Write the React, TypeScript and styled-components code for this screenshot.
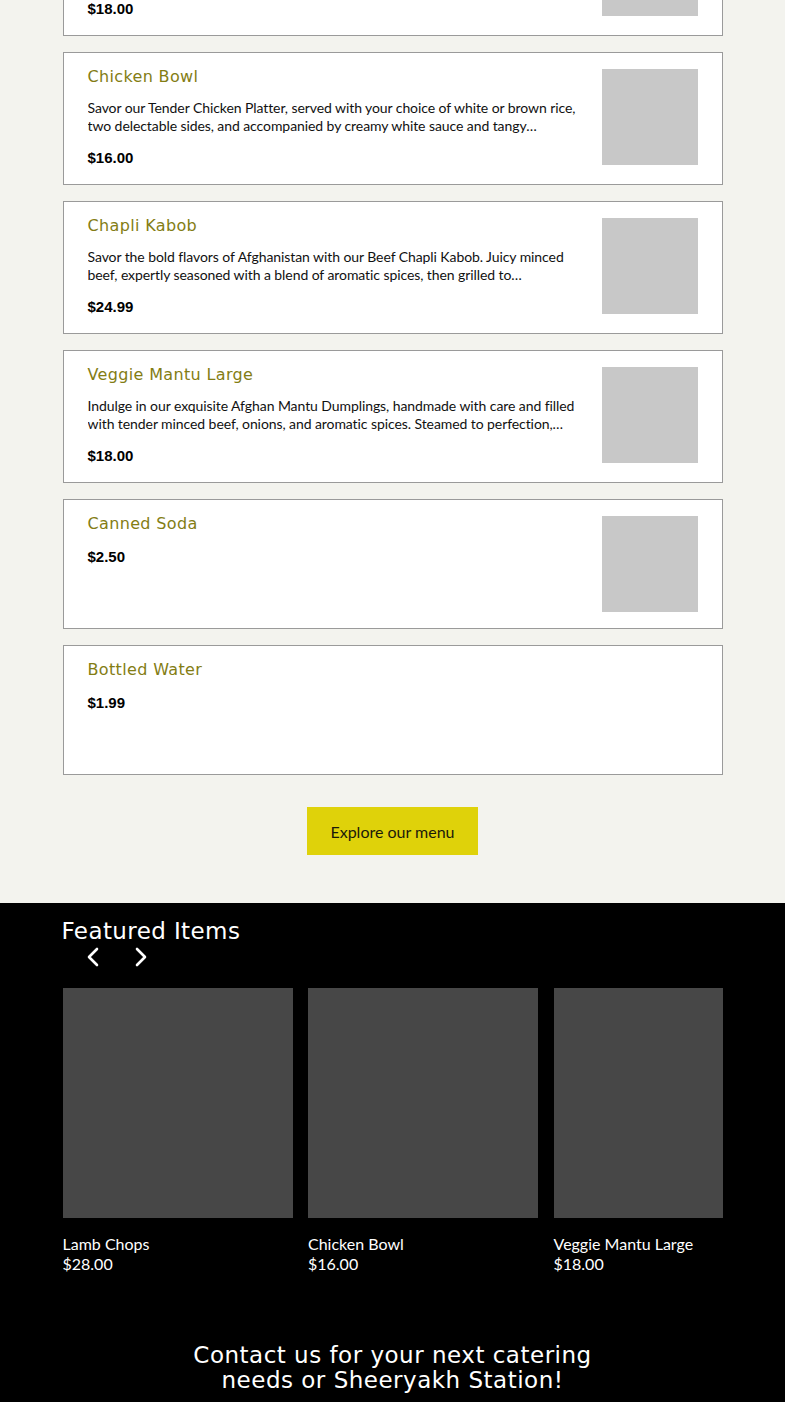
import styled, { createGlobalStyle } from "styled-components";

const GlobalStyle = createGlobalStyle`
  body {
    margin: 0;
    background: #000;
    font-family: Lato, "Open Sans", sans-serif;
  }
  * { box-sizing: border-box; }
`;

interface MenuItem {
  title: string;
  description?: string;
  price: string;
  image?: boolean;
}

const menuItems: MenuItem[] = [
  {
    title: "Beef Mantu Large",
    description:
      "Indulge in our exquisite Afghan Mantu Dumplings, handmade with care and filled with tender minced beef, onions, and aromatic spices.",
    price: "$18.00",
    image: true,
  },
  {
    title: "Chicken Bowl",
    description:
      "Savor our Tender Chicken Platter, served with your choice of white or brown rice, two delectable sides, and accompanied by creamy white sauce and tangy pomegranate chutney.",
    price: "$16.00",
    image: true,
  },
  {
    title: "Chapli Kabob",
    description:
      "Savor the bold flavors of Afghanistan with our Beef Chapli Kabob. Juicy minced beef, expertly seasoned with a blend of aromatic spices, then grilled to mouthwatering perfection.",
    price: "$24.99",
    image: true,
  },
  {
    title: "Veggie Mantu Large",
    description:
      "Indulge in our exquisite Afghan Mantu Dumplings, handmade with care and filled with tender minced beef, onions, and aromatic spices. Steamed to perfection, topped with yogurt and lentils.",
    price: "$18.00",
    image: true,
  },
  { title: "Canned Soda", price: "$2.50", image: true },
  { title: "Bottled Water", price: "$1.99" },
];

const featured = [
  { name: "Lamb Chops", price: "$28.00" },
  { name: "Chicken Bowl", price: "$16.00" },
  { name: "Veggie Mantu Large", price: "$18.00" },
];

const Chevron = ({ dir }: { dir: "left" | "right" }) => (
  <svg width="14" height="22" viewBox="0 0 14 22" fill="none">
    <polyline
      points={dir === "left" ? "11,3 3,11 11,19" : "3,3 11,11 3,19"}
      stroke="#fff"
      strokeWidth="2.6"
      strokeLinecap="round"
      strokeLinejoin="round"
    />
  </svg>
);

export default function App() {
  return (
    <>
      <GlobalStyle />
      <MenuSection>
        <List>
          {menuItems.map((item, index) => (
            <Card key={index}>
              <Info>
                <Title>{item.title}</Title>
                {item.description && <Description>{item.description}</Description>}
                <Price>{item.price}</Price>
              </Info>
              {item.image && <Thumb />}
            </Card>
          ))}
        </List>
        <ExploreButton>Explore our menu</ExploreButton>
      </MenuSection>

      <FeaturedSection>
        <Inner>
          <SectionHeading>Featured Items</SectionHeading>
          <Arrows>
            <ArrowButton aria-label="previous">
              <Chevron dir="left" />
            </ArrowButton>
            <ArrowButton aria-label="next">
              <Chevron dir="right" />
            </ArrowButton>
          </Arrows>
          <Track>
            {featured.map((item) => (
              <FeaturedCard key={item.name}>
                <FeaturedImage />
                <FeaturedName>{item.name}</FeaturedName>
                <FeaturedPrice>{item.price}</FeaturedPrice>
              </FeaturedCard>
            ))}
          </Track>
        </Inner>
        <Contact>
          Contact us for your next catering
          <br />
          needs or Sheeryakh Station!
        </Contact>
      </FeaturedSection>
    </>
  );
}

const MenuSection = styled.section`
  background: #f3f3ee;
  padding-bottom: 48px;
  display: flex;
  flex-direction: column;
  align-items: center;
  overflow: hidden;
`;

const List = styled.div`
  width: 660px;
  display: flex;
  flex-direction: column;
  gap: 16px;
  margin-top: -97px;
`;

const Card = styled.div`
  display: flex;
  gap: 24px;
  min-height: 130px;
  padding: 12px 24px 16px;
  background: #fff;
  border: 1px solid #9a9a9a;
`;

const Info = styled.div`
  flex: 1;
  min-width: 0;
  display: flex;
  flex-direction: column;
`;

const Title = styled.h3`
  margin: 1px 0 11px;
  font-family: "DejaVu Sans", sans-serif;
  font-size: 16px;
  line-height: 22px;
  font-weight: 400;
  letter-spacing: 0.35px;
  color: #837d14;
`;

const Description = styled.p`
  margin: 0 0 12px;
  max-height: 36px;
  font-size: 14px;
  line-height: 18px;
  letter-spacing: -0.08px;
  color: #111;
  display: -webkit-box;
  -webkit-line-clamp: 2;
  -webkit-box-orient: vertical;
  overflow: hidden;
`;

const Price = styled.div`
  font-family: "Liberation Sans", Arial, sans-serif;
  font-weight: 700;
  font-size: 15px;
  line-height: 21px;
  color: #000;
`;

const Thumb = styled.div`
  flex: none;
  width: 96px;
  height: 96px;
  margin-top: 4px;
  background: #c8c8c8;
`;

const ExploreButton = styled.button`
  margin-top: 32px;
  width: 171px;
  height: 48px;
  border: none;
  background: #dfd20a;
  color: #1a1a0a;
  font-family: Lato, sans-serif;
  font-size: 16px;
  cursor: pointer;
`;

const FeaturedSection = styled.section`
  background: #000;
  padding: 14px 0 12px;
`;

const Inner = styled.div`
  width: 660px;
  margin: 0 auto;
`;

const SectionHeading = styled.h2`
  margin: 0 0 0 -1px;
  font-family: "DejaVu Sans", sans-serif;
  font-size: 23px;
  line-height: 28px;
  font-weight: 400;
  letter-spacing: 0.4px;
  color: #fff;
`;

const Arrows = styled.div`
  display: flex;
  gap: 24px;
  padding-left: 18px;
  margin-bottom: 19px;
`;

const ArrowButton = styled.button`
  width: 24px;
  height: 24px;
  padding: 0;
  border: none;
  background: none;
  display: grid;
  place-items: center;
  cursor: pointer;
`;

const Track = styled.div`
  display: flex;
  gap: 15.5px;
  overflow: hidden;
`;

const FeaturedCard = styled.div`
  flex: none;
  width: 230px;
`;

const FeaturedImage = styled.div`
  width: 230px;
  height: 230px;
  background: #474747;
  margin-bottom: 16px;
`;

const FeaturedName = styled.div`
  font-size: 16px;
  line-height: 20px;
  color: #fff;
`;

const FeaturedPrice = styled(FeaturedName)``;

const Contact = styled.h2`
  margin: 69px 0 0;
  text-align: center;
  font-family: "DejaVu Sans", sans-serif;
  font-size: 23px;
  line-height: 25px;
  font-weight: 400;
  letter-spacing: 0.5px;
  color: #fff;
`;
